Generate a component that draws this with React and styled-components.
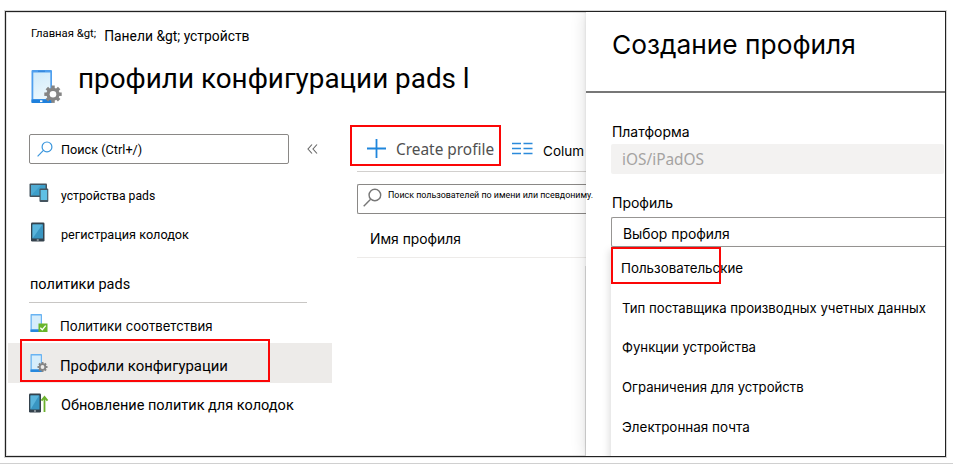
import React from 'react';
import styled, { createGlobalStyle } from 'styled-components';

const GlobalStyle = createGlobalStyle`
  * { box-sizing: border-box; }
  body { margin: 0; background: #fff; color: #000; font-family: Inter, Roboto, sans-serif; overflow: hidden; }
`;

const Page = styled.div`
  height: 464px;
  padding: 11px 0 0 5px;
  border-bottom: 1px solid #d0d0d0;
`;
const Frame = styled.div`
  display: flex;
  width: 941px;
  height: 446px;
  border: 1px solid #222;
  box-shadow: 0 0 0 1px rgba(0, 0, 0, 0.16), inset 0 0 0 1px rgba(0, 0, 0, 0.12);
  overflow: hidden;
`;
const Main = styled.main`
  flex: none;
  width: 580px;
  display: flex;
  flex-direction: column;
`;
const Label = styled.span`
  font-family: ${(p) => (p.$narrow ? 'Roboto' : 'Inter')}, sans-serif;
  font-size: ${(p) => p.$size}px;
  line-height: 20px;
  white-space: nowrap;
`;
const Breadcrumb = styled.nav`
  display: flex;
  align-items: flex-start;
  gap: 8px;
  height: 48px;
  padding: 12px 0 0 25px;
`;
const Current = styled(Label)`
  margin-top: 2px;
`;
const TitleRow = styled.header`
  display: flex;
  gap: 16px;
  height: 52px;
  padding-left: 24px;
`;
const TitleIcon = styled.div`
  padding-top: 8px;
  width: 32px;
`;
const Title = styled.h1`
  margin: 0;
  font-family: Roboto, sans-serif;
  font-size: 27.85px;
  font-weight: 400;
  line-height: 37px;
  white-space: nowrap;
`;
const Body = styled.div`
  display: flex;
  flex: 1;
`;
const Sidebar = styled.aside`
  flex: none;
  width: 326px;
  padding: 22px 0 0 2px;
`;
const SearchRow = styled.div`
  display: flex;
  align-items: center;
  gap: 18px;
  margin: 0 0 9px 21px;
`;
const SearchBox = styled.div`
  display: flex;
  align-items: center;
  width: 260px;
  height: 30px;
  padding-left: 7px;
  gap: 8px;
  border: 1px solid #8a8886;
  border-radius: 2px;
  & > span { padding-top: 2px; }
`;
const NavItem = styled.a`
  position: relative;
  display: flex;
  align-items: center;
  height: ${(p) => p.$height || 40}px;
  padding-left: 21px;
  gap: 12px;
  background: ${(p) => (p.$active ? '#edebe9' : 'transparent')};
  & > span { padding-top: 6px; }
  & > svg { flex: none; }
`;
const Group = styled.h2`
  display: flex;
  align-items: center;
  width: 278px;
  height: 52px;
  margin: 0 0 0 21px;
  padding: 16px 0 0 1px;
  border-bottom: 1px solid #c8c6c4;
  font-weight: 400;
`;
const Marker = styled.div`
  position: absolute;
  left: ${(p) => p.$x}px;
  top: ${(p) => p.$y}px;
  width: ${(p) => p.$w}px;
  height: ${(p) => p.$h}px;
  border: 2px solid #fb0606;
`;
const List = styled.section`
  flex: 1;
  min-width: 0;
  display: flex;
  flex-direction: column;
  padding: 14px 0 0 25px;
`;
const Toolbar = styled.div`
  position: relative;
  display: flex;
  height: 46px;
  padding: 12px 0 0 9px;
  border-bottom: 1px solid #d2d0ce;
  & > * { flex: none; }
`;
const CreateText = styled.span`
  margin: 2px 0 0 9px;
  font: 15.4px/20px "Noto Sans", sans-serif;
  color: #505050;
`;
const ColumnsIcon = styled.div`
  margin: 3px 10px 0 18px;
`;
const ColumnsText = styled(Label)`
  margin-top: 3px;
`;
const Filter = styled.div`
  display: flex;
  height: 30px;
  margin: 12px 0 0;
  padding: 3px 0 0 5px;
  gap: 6px;
  border: 1px solid #8a8886;
  border-right: 0;
  border-radius: 2px 0 0 2px;
  & > svg { flex: none; }
`;
const FilterText = styled(Label)`
  position: relative;
  z-index: 2;
  line-height: 15px;
`;
const ColumnHead = styled.div`
  display: flex;
  align-items: center;
  height: 44px;
  padding: 6px 0 0 13px;
  border-bottom: 1px solid #edebe9;
`;
const Rows = styled.div`
  flex: 1;
  margin-top: 8px;
  border-right: 1px solid #dedede;
`;
const Panel = styled.section`
  position: relative;
  z-index: 1;
  width: 359px;
  background: #fff;
  box-shadow: -1px 0 14px rgba(0, 0, 0, 0.13), -1px 0 2px rgba(0, 0, 0, 0.06);
`;
const PanelTitle = styled.h2`
  height: 81px;
  margin: 0;
  padding: 16px 0 0 26px;
  border-bottom: 2px solid #777;
  font-size: 26.3px;
  font-weight: 400;
  line-height: 34px;
`;
const Form = styled.div`
  display: flex;
  flex-direction: column;
  padding: 29px 0 0 25px;
`;
const FieldLabel = styled(Label)`
  margin-left: 1px;
`;
const Disabled = styled.div`
  height: 30px;
  margin: 2px 1px 19px 0;
  padding: 6px 0 0 11px;
  border-radius: 2px;
  background: #f3f2f1;
  color: #a5a3a1;
  font: 15.4px/20px "Noto Sans", sans-serif;
`;
const Select = styled.div`
  height: 30px;
  margin-top: 4px;
  padding: 5px 0 0 11px;
  border: 1px solid #979593;
  border-right: 0;
  border-radius: 2px 0 0 2px;
`;
const Menu = styled.ul`
  position: relative;
  height: 212px;
  margin: 0;
  padding: 11px 0 0 10px;
  list-style: none;
  box-shadow: -2px 3px 7px rgba(0, 0, 0, 0.13);
`;
const Option = styled.li`
  display: flex;
  height: 39.7px;
  padding-left: ${(p) => p.$indent}px;
`;

const Gear = ({ cx, cy, r, hole }) => (
  <g transform={`translate(${cx} ${cy})`} fill="#858585">
    {[0, 45, 90, 135].map((a) => (
      <rect key={a} x={-r * 0.2} y={-r} width={r * 0.4} height={r * 2} transform={`rotate(${a})`} />
    ))}
    <circle r={r * 0.75} />
    <circle r={r * 0.38} fill={hole} />
  </g>
);
const ProfileIcon = () => (
  <svg width="32" height="36" viewBox="0 0 32 36">
    <defs>
      <linearGradient id="screen" x2="0.3" y2="1">
        <stop stopColor="#cfeafa" /><stop offset="1" stopColor="#eaf7fd" />
      </linearGradient>
    </defs>
    <rect x="1.5" y="2" width="20.5" height="33" rx="1" fill="#4f9fee" />
    <rect x="3.3" y="4.5" width="17" height="26.5" fill="url(#screen)" />
    <rect x="8" y="2.7" width="7" height="1" fill="#2f80d6" />
    <path d="M1.5 31.5H22v2.7q0 .8-.8.8H2.3q-.8 0-.8-.8z" fill="#1f80dc" />
    <rect x="10" y="32.3" width="2.4" height="1.8" fill="#fff" />
    <Gear cx={23} cy={26.2} r={8.7} hole="#fff" />
  </svg>
);
const SmallPhone = ({ children }) => (
  <svg width="19" height="20" viewBox="0 0 19 20">
    <rect x="1.5" y="1" width="11.5" height="18" rx=".7" fill="#69b3f2" />
    <rect x="2.8" y="2.5" width="9" height="13.8" fill="#d6edfb" />
    <path d="M1.5 16.5H13V19H2q-.5 0-.5-.5z" fill="#2788dd" />
    {children}
  </svg>
);
const DevicesIcon = () => (
  <svg width="20" height="20" viewBox="0 0 20 20">
    <rect x=".5" y="0.5" width="17.5" height="13.5" rx="1" fill="#44545f" />
    <rect x="2" y="2" width="14.5" height="10.5" fill="#3d9fca" />
    <path d="M2 12.5V2h10z" fill="#4fabd3" />
    <rect x="10.5" y="5.5" width="8.8" height="13.5" rx="1" fill="#44545f" />
    <rect x="11.6" y="7" width="6.6" height="10" fill="#5fc0e4" />
  </svg>
);
const TabletShape = ({ x, w }) => (
  <g transform={`translate(${x} 0)`}>
    <rect y=".5" width={w} height="19" rx="1.2" fill="#34424d" />
    <rect x="1.5" y="2.5" width={w - 3} height="14" fill="#3996c2" />
    <path d={`M1.5 16.5v-14H${w - 2}z`} fill="#5ab5dc" />
    <rect x={w / 2 - 1} y="17.5" width="2" height="1" fill="#cfd8dc" />
  </g>
);
const TabletIcon = () => (
  <svg width="20" height="20" viewBox="0 0 20 20"><TabletShape x={2} w={13.5} /></svg>
);
const UpdateIcon = () => (
  <svg width="20" height="20" viewBox="0 0 20 20">
    <TabletShape x={0} w={12} />
    <path d="M15.5 19V4M12.5 7.6l3-3.7 3 3.7" fill="none" stroke="#6bb12c" strokeWidth="1.8" />
  </svg>
);
const SearchIcon = ({ size, color }) => (
  <svg width={size} height={size} viewBox="0 0 16 16" fill="none" stroke={color} strokeWidth="1.2">
    <circle cx="10" cy="5.9" r="4.9" /><path d="M6.4 9.4L.6 15.3" />
  </svg>
);

const options = [
  'Пользовательские',
  'Тип поставщика производных учетных данных',
  'Функции устройства',
  'Ограничения для устройств',
  'Электронная почта',
];
const optionSizes = [13.35, 13.2, 13.2, 13.15, 13.45];

export default function App() {
  return (
    <Page>
      <GlobalStyle />
      <Frame>
        <Main>
          <Breadcrumb>
            <Label $narrow $size={11.3}>Главная &amp;gt;</Label>
            <Current $narrow $size={13.85}>Панели &amp;gt; устройств</Current>
          </Breadcrumb>
          <TitleRow>
            <TitleIcon><ProfileIcon /></TitleIcon>
            <Title>профили конфигурации pads l</Title>
          </TitleRow>
          <Body>
            <Sidebar>
              <SearchRow>
                <SearchBox>
                  <SearchIcon size={16} color="#3a96dd" />
                  <Label $narrow $size={12.7}>Поиск (Ctrl+/)</Label>
                </SearchBox>
                <svg width="11" height="10" viewBox="0 0 11 10" fill="none" stroke="#666" strokeWidth="1.1">
                  <path d="M5 .5L1 5l4 4.5M10 .5L6 5l4 4.5" />
                </svg>
              </SearchRow>
              <NavItem><DevicesIcon /><Label $narrow $size={12.2}>устройства pads</Label></NavItem>
              <NavItem $height={38}><TabletIcon /><Label $narrow $size={12.7}>регистрация колодок</Label></NavItem>
              <Group><Label $narrow $size={14.5}>политики pads</Label></Group>
              <NavItem>
                <SmallPhone>
                  <rect x="9.5" y="10.5" width="9" height="8.5" fill="#69b52c" />
                  <path d="M11.3 14.7l2 2 3.4-4" fill="none" stroke="#fff" strokeWidth="1.3" />
                </SmallPhone>
                <Label $size={13.15}>Политики соответствия</Label>
              </NavItem>
              <NavItem $active>
                <SmallPhone><Gear cx={13.5} cy={14} r={5} hole="#edebe9" /></SmallPhone>
                <Label $narrow $size={14.9}>Профили конфигурации</Label>
                <Marker $x={12} $y={-4} $w={250} $h={43} />
              </NavItem>
              <NavItem $height={39}><UpdateIcon /><Label $narrow $size={14.53}>Обновление политик для колодок</Label></NavItem>
            </Sidebar>
            <List>
              <Toolbar>
                <svg width="21" height="21" viewBox="0 0 21 21" stroke="#1f86dc" strokeWidth="1.8">
                  <path d="M10.5 1v19M1 10.5h19" />
                </svg>
                <CreateText>Create profile</CreateText>
                <ColumnsIcon>
                  <svg width="21" height="15" viewBox="0 0 21 15" stroke="#2b8adb" strokeWidth="1.6">
                    <path d="M0 1.5h9M11.5 1.5h9M0 6.5h9M11.5 6.5h9M0 11.5h9M11.5 11.5h9" />
                  </svg>
                </ColumnsIcon>
                <ColumnsText $size={13.5}>Colum</ColumnsText>
                <Marker $x={-7} $y={-1} $w={151} $h={41} />
              </Toolbar>
              <Filter>
                <SearchIcon size={19} color="#777" />
                <FilterText $narrow $size={8.9}>Поиск пользователей по имени или псевдониму.</FilterText>
              </Filter>
              <ColumnHead><Label $size={13.85}>Имя профиля</Label></ColumnHead>
              <Rows />
            </List>
          </Body>
        </Main>
        <Panel>
          <PanelTitle>Создание профиля</PanelTitle>
          <Form>
            <FieldLabel $size={13.95}>Платформа</FieldLabel>
            <Disabled>iOS/iPadOS</Disabled>
            <FieldLabel $size={14}>Профиль</FieldLabel>
            <Select><Label $size={13.9}>Выбор профиля</Label></Select>
            <Menu>
              {options.map((text, i) => (
                <Option key={text} $indent={i ? 1 : 0}><Label $size={optionSizes[i]}>{text}</Label></Option>
              ))}
              <Marker $x={0} $y={0} $w={110} $h={37} />
            </Menu>
          </Form>
        </Panel>
      </Frame>
    </Page>
  );
}
